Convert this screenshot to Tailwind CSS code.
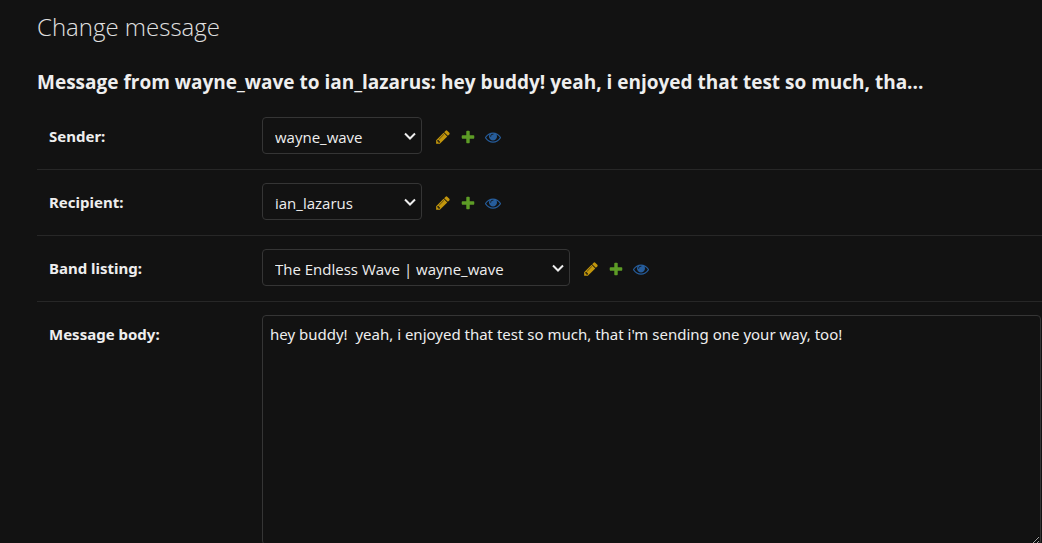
<!DOCTYPE html>
<html lang="en">
<head>
<meta charset="utf-8">
<meta name="viewport" content="width=device-width, initial-scale=1">
<title>Change message</title>
<script src="https://cdn.jsdelivr.net/npm/@tailwindcss/browser@4"></script>
</head>
<body class="overflow-x-hidden bg-[#121212] font-['Segoe_UI','Open_Sans',sans-serif] text-[15px] text-[#eeeeee]">
<svg class="hidden" aria-hidden="true">
  <symbol id="pencil" viewBox="0 0 1792 1792"><path d="M491 1536l91-91-235-235-91 91v107h128v128h107zm523-928q0-22-22-22-10 0-17 7l-542 542q-7 7-7 17 0 22 22 22 10 0 17-7l542-542q7-7 7-17zm-54-192l416 416-832 832h-416v-416zm683 96q0 53-37 90l-166 166-416-416 166-165q36-38 90-38 53 0 91 38l235 234q37 39 37 91z"/></symbol>
  <symbol id="plus" viewBox="0 0 1792 1792"><path d="M1600 796v192q0 40-28 68t-68 28h-416v416q0 40-28 68t-68 28h-192q-40 0-68-28t-28-68v-416h-416q-40 0-68-28t-28-68v-192q0-40 28-68t68-28h416v-416q0-40 28-68t68-28h192q40 0 68 28t28 68v416h416q40 0 68 28t28 68z"/></symbol>
  <symbol id="eye" viewBox="0 0 1792 1792"><path d="M1664 960q-152-236-381-353 61 104 61 225 0 185-131.5 316.5t-316.5 131.5-316.5-131.5-131.5-316.5q0-121 61-225-229 117-381 353 133 205 333.5 326.5t434.5 121.5 434.5-121.5 333.5-326.5zm-720-384q0-20-14-34t-34-14q-125 0-214.5 89.5t-89.5 214.5q0 20 14 34t34 14 34-14 14-34q0-86 61-147t147-61q20 0 34-14t14-34zm848 384q0 34-20 69-140 230-376.5 368.5t-499.5 138.5-499.5-139-376.5-368q-20-35-20-69t20-69q140-229 376.5-368t499.5-139 499.5 139 376.5 368q20 35 20 69z"/></symbol>
  <symbol id="chevron" viewBox="0 0 12 8"><path d="M1 1.5l5 5 5-5" fill="none" stroke="currentColor" stroke-width="2"/></symbol>
</svg>
<main class="pl-[37px] pt-[11px]">
  <h1 class="text-[24px] leading-8 font-light text-[#e0e0e0]">Change message</h1>
  <h2 class="mt-[25px] text-[19px] leading-7 font-bold whitespace-nowrap">Message from wayne_wave to ian_lazarus: hey buddy! yeah, i enjoyed that test so much, tha...</h2>
  <form class="mt-2">
    <div class="flex items-start border-b border-[#272727] pt-[13px] pb-[15px] pl-3">
      <label for="sender" class="w-[213px] shrink-0 pt-[7px] font-['Segoe_UI','Noto_Sans',sans-serif] leading-6 font-bold">Sender:</label>
      <div class="flex items-center">
        <div class="grid w-40 items-center">
          <select id="sender" class="col-start-1 row-start-1 h-[37px] w-full appearance-none rounded border border-[#353535] bg-[#121212] pt-1 pr-8 pl-3"><option>wayne_wave</option></select>
          <svg class="pointer-events-none col-start-1 row-start-1 mr-[6px] h-2 w-3 justify-self-end"><use href="#chevron"/></svg>
        </div>
        <div class="ml-[13px] flex gap-[9px] pt-0.5 opacity-80">
          <a href="#" aria-label="Change sender" class="text-[#efb80b]"><svg class="size-4 fill-current"><use href="#pencil"/></svg></a>
          <a href="#" aria-label="Add sender" class="text-[#70bf2b]"><svg class="size-4 fill-current"><use href="#plus"/></svg></a>
          <a href="#" aria-label="View sender" class="text-[#2b70bf]"><svg class="size-4 fill-current"><use href="#eye"/></svg></a>
        </div>
      </div>
    </div>
    <div class="flex items-start border-b border-[#272727] pt-[13px] pb-[15px] pl-3">
      <label for="recipient" class="w-[213px] shrink-0 pt-[7px] font-['Segoe_UI','Noto_Sans',sans-serif] leading-6 font-bold">Recipient:</label>
      <div class="flex items-center">
        <div class="grid w-40 items-center">
          <select id="recipient" class="col-start-1 row-start-1 h-[37px] w-full appearance-none rounded border border-[#353535] bg-[#121212] pt-1 pr-8 pl-3"><option>ian_lazarus</option></select>
          <svg class="pointer-events-none col-start-1 row-start-1 mr-[6px] h-2 w-3 justify-self-end"><use href="#chevron"/></svg>
        </div>
        <div class="ml-[13px] flex gap-[9px] pt-0.5 opacity-80">
          <a href="#" aria-label="Change recipient" class="text-[#efb80b]"><svg class="size-4 fill-current"><use href="#pencil"/></svg></a>
          <a href="#" aria-label="Add recipient" class="text-[#70bf2b]"><svg class="size-4 fill-current"><use href="#plus"/></svg></a>
          <a href="#" aria-label="View recipient" class="text-[#2b70bf]"><svg class="size-4 fill-current"><use href="#eye"/></svg></a>
        </div>
      </div>
    </div>
    <div class="flex items-start border-b border-[#272727] pt-[13px] pb-[15px] pl-3">
      <label for="band" class="w-[213px] shrink-0 pt-[7px] font-['Segoe_UI','Noto_Sans',sans-serif] leading-6 font-bold">Band listing:</label>
      <div class="flex items-center">
        <div class="grid w-[308px] items-center">
          <select id="band" class="col-start-1 row-start-1 h-[37px] w-full appearance-none rounded border border-[#353535] bg-[#121212] pt-1 pr-8 pl-3"><option>The Endless Wave | wayne_wave</option></select>
          <svg class="pointer-events-none col-start-1 row-start-1 mr-[6px] h-2 w-3 justify-self-end"><use href="#chevron"/></svg>
        </div>
        <div class="ml-[13px] flex gap-[9px] pt-0.5 opacity-80">
          <a href="#" aria-label="Change band listing" class="text-[#efb80b]"><svg class="size-4 fill-current"><use href="#pencil"/></svg></a>
          <a href="#" aria-label="Add band listing" class="text-[#70bf2b]"><svg class="size-4 fill-current"><use href="#plus"/></svg></a>
          <a href="#" aria-label="View band listing" class="text-[#2b70bf]"><svg class="size-4 fill-current"><use href="#eye"/></svg></a>
        </div>
      </div>
    </div>
    <div class="flex items-start pt-[13px] pr-px pl-3">
      <label for="body" class="w-[213px] shrink-0 pt-[7px] font-['Segoe_UI','Noto_Sans',sans-serif] leading-6 font-bold">Message body:</label>
      <textarea id="body" spellcheck="false" class="block h-[230px] min-w-0 flex-1 resize rounded border border-[#353535] bg-[#121212] px-[7px] py-[6px] font-['Segoe_UI','Noto_Sans',sans-serif] leading-6 scheme-dark">hey buddy!  yeah, i enjoyed that test so much, that i'm sending one your way, too!</textarea>
    </div>
  </form>
</main>
</body>
</html>
